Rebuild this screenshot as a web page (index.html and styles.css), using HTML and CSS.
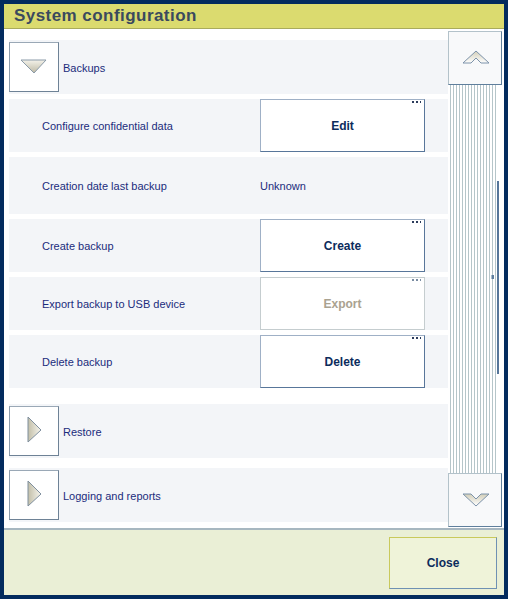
FILE: index.html
```html
<!DOCTYPE html>
<html lang="en">
<head>
  <meta charset="UTF-8" />
  <title>System configuration</title>
  <link rel="stylesheet" href="styles.css">
</head>
<body>

<div class="window">
  <header class="titlebar"><h1>System configuration</h1></header>

  <div class="content">
    <div class="list">

      <!-- open group -->
      <section class="group open">
        <div class="group-head">
          <button class="toggle">
            <svg width="50" height="50" viewBox="0 0 50 50">
              <defs>
                <linearGradient id="gDown" x1="0" y1="0" x2="0" y2="1">
                  <stop offset="0" stop-color="#f4f2ea"/>
                  <stop offset="1" stop-color="#bdb9a4"/>
                </linearGradient>
              </defs>
              <polygon points="12,18 37,18 25,31" fill="url(#gDown)" stroke="#8a9aa8" stroke-width="1"/>
            </svg>
          </button>
          <span class="group-name">Backups</span>
        </div>

        <div class="item">
          <span class="label">Configure confidential data</span>
          <button class="action">Edit<i class="more"></i></button>
        </div>
        <div class="item tall">
          <span class="label">Creation date last backup</span>
          <span class="value">Unknown</span>
        </div>
        <div class="item">
          <span class="label">Create backup</span>
          <button class="action">Create<i class="more"></i></button>
        </div>
        <div class="item">
          <span class="label">Export backup to USB device</span>
          <button class="action" disabled>Export<i class="more"></i></button>
        </div>
        <div class="item">
          <span class="label">Delete backup</span>
          <button class="action">Delete<i class="more"></i></button>
        </div>
      </section>

      <section class="group">
        <div class="group-head">
          <button class="toggle">
            <svg width="50" height="50" viewBox="0 0 50 50">
              <defs>
                <linearGradient id="gRight" x1="0" y1="0" x2="1" y2="0">
                  <stop offset="0" stop-color="#c2bea8"/>
                  <stop offset="1" stop-color="#f6f5ee"/>
                </linearGradient>
              </defs>
              <polygon points="19,11 19,36 32,24" fill="url(#gRight)" stroke="#7f8f9e" stroke-width="1"/>
            </svg>
          </button>
          <span class="group-name">Restore</span>
        </div>
      </section>

      <section class="group">
        <div class="group-head">
          <button class="toggle">
            <svg width="50" height="50" viewBox="0 0 50 50">
              <polygon points="19,11 19,36 32,24" fill="url(#gRight)" stroke="#7f8f9e" stroke-width="1"/>
            </svg>
          </button>
          <span class="group-name">Logging and reports</span>
        </div>
      </section>

    </div>

    <div class="scrollbar">
      <button class="scroll-btn">
        <svg width="52" height="52" viewBox="0 0 52 52">
          <defs>
            <linearGradient id="gUp" x1="0" y1="0" x2="0" y2="1">
              <stop offset="0" stop-color="#d2ceb8"/>
              <stop offset="1" stop-color="#ffffff"/>
            </linearGradient>
          </defs>
          <polygon points="14,31 27,19 40,31 32,31 27,26 22,31" fill="url(#gUp)" stroke="#7d93aa" stroke-width="1"/>
        </svg>
      </button>
      <div class="track"><div class="thumb"></div><div class="grip"></div></div>
      <button class="scroll-btn">
        <svg width="52" height="52" viewBox="0 0 52 52">
          <polygon points="14,20 27,32 40,20 32,20 27,25 22,20" fill="url(#gUp)" stroke="#7d93aa" stroke-width="1"/>
        </svg>
      </button>
    </div>
  </div>

  <footer class="footer">
    <button class="close">Close</button>
  </footer>
</div>

</body>
</html>
```

FILE: styles.css
```css
:root {
  --frame:#032b5e; --title:#dbdb6f; --row:#f3f5f8; --text:#1b2c7c; --btn-text:#0c2c5c;
  --foot:#eaefd6;
}
*{box-sizing:border-box}
body{margin:0;background:var(--frame);padding:4px;font-family:"Liberation Sans",Arial,sans-serif;}
button{font-family:inherit;cursor:pointer;padding:0}

.window{width:500px;height:591px;display:flex;flex-direction:column;background:#fff}

.titlebar{height:25px;background:var(--title);border-bottom:1px solid #a9ab5c;padding:0 10px}
.titlebar h1{margin:0;font-size:17px;line-height:24px;font-weight:700;color:#3a495e;letter-spacing:0.45px}

.content{height:501px;display:flex;border-bottom:2px solid #a7b7c0;overflow:hidden}

.list{flex:1;display:flex;flex-direction:column;gap:10px;padding:11px 0 0 5px}
.group{display:flex;flex-direction:column;gap:5px}
.group.open{padding-bottom:6px}

.group-head{height:54px;background:var(--row);display:flex;align-items:center;gap:4px}
.toggle{width:50px;height:50px;background:#fff;border:1px solid;border-color:#9aa8b6 #6e8296 #6e8296 #8c9cac;display:block}
.toggle svg{display:block;margin:-1px}
.group-name{font-size:11px;color:var(--text);padding-top:2px}

.item{height:53px;background:var(--row);display:flex;align-items:center}
.item.tall{height:57px}
.label{width:251px;padding-left:33px;font-size:11px;color:var(--text)}
.value{font-size:11px;color:var(--text)}

.action{position:relative;width:165px;height:53px;background:#fff;border:1px solid;
        border-color:#9fb0c6 #58769a #58769a #9fb0c6;font-size:12px;font-weight:700;color:var(--btn-text)}
.action:disabled{border-color:#c5cdcf;color:#aaa290;cursor:default}
.more{position:absolute;top:1px;right:3px;width:10px;height:2px;
      background:radial-gradient(circle,#2c3c5c 60%,transparent 61%) 0 0/4px 2px repeat-x}
.action:disabled .more{background-image:radial-gradient(circle,#7a8ca2 60%,transparent 61%)}

.scrollbar{width:54px;margin:2px 2px 1px 0;display:flex;flex-direction:column}
.scroll-btn{width:54px;height:54px;background:#f8f9fa;border:1px solid;border-color:#b3c2ca #5f7f9c #5f7f9c #b3c2ca}
.scroll-btn svg{display:block}
.track{flex:1;position:relative;
       background:repeating-linear-gradient(90deg,#b5c5c9 0 1px,#fff 1px 3px) 2px 0/46px 100% no-repeat}
.thumb{position:absolute;left:49px;top:96px;width:2px;height:193px;background:#56769a}
.grip{position:absolute;left:43px;top:190px;width:3px;height:4px;background:#5e7e9e;border-left:1px solid #a8bccc}

.footer{flex:1;background:var(--foot);display:flex;justify-content:flex-end;padding:7px 7px 0 0}
.close{width:108px;height:52px;background:#eff3d9;border:1px solid;border-color:#c9c95c #6f91b3 #6f91b3 #c9c95c;
       font-size:12px;font-weight:700;color:var(--btn-text)}
```
